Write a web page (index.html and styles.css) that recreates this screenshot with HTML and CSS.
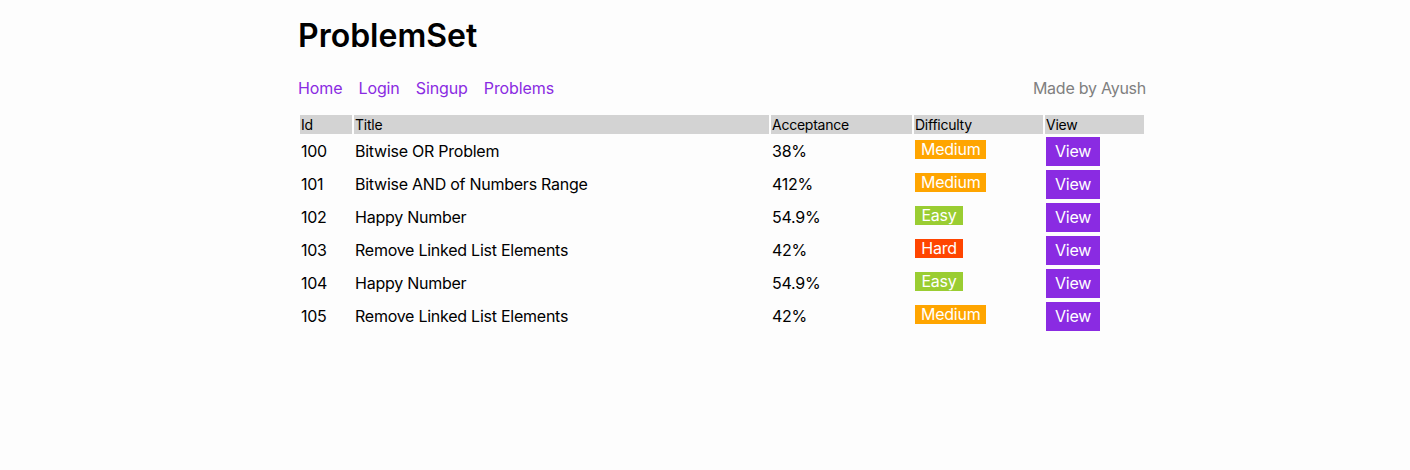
FILE: index.html
```html
<!DOCTYPE html>
<html lang="en">
<head>
<meta charset="utf-8">
<title>ProblemSet</title>
<link rel="stylesheet" href="styles.css">
</head>
<body>
<div class="page">
  <h1 class="brand">ProblemSet</h1>
  <nav class="nav">
    <div class="links">
      <a href="#">Home</a>
      <a href="#">Login</a>
      <a href="#">Singup</a>
      <a href="#">Problems</a>
    </div>
    <span class="credit">Made by Ayush</span>
  </nav>
  <table class="problems">
    <thead>
      <tr>
        <th class="c-id">Id</th>
        <th class="c-title">Title</th>
        <th class="c-acc">Acceptance</th>
        <th class="c-diff">Difficulty</th>
        <th class="c-view">View</th>
      </tr>
    </thead>
    <tbody>
      <tr><td>100</td><td>Bitwise OR Problem</td><td>38%</td><td><span class="badge medium">Medium</span></td><td><button class="view">View</button></td></tr>
      <tr><td>101</td><td>Bitwise AND of Numbers Range</td><td>412%</td><td><span class="badge medium">Medium</span></td><td><button class="view">View</button></td></tr>
      <tr><td>102</td><td>Happy Number</td><td>54.9%</td><td><span class="badge easy">Easy</span></td><td><button class="view">View</button></td></tr>
      <tr><td>103</td><td>Remove Linked List Elements</td><td>42%</td><td><span class="badge hard">Hard</span></td><td><button class="view">View</button></td></tr>
      <tr><td>104</td><td>Happy Number</td><td>54.9%</td><td><span class="badge easy">Easy</span></td><td><button class="view">View</button></td></tr>
      <tr><td>105</td><td>Remove Linked List Elements</td><td>42%</td><td><span class="badge medium">Medium</span></td><td><button class="view">View</button></td></tr>
    </tbody>
  </table>
</div>
</body>
</html>
```

FILE: styles.css
```css
body {
  margin: 0;
  background: #fdfdfd;
  color: #000;
  font-family: Inter, "Open Sans", sans-serif;
  letter-spacing: -0.25px;
}

.page {
  width: 848px;
  margin-left: 298px;
  padding-top: 16px;
}

.brand {
  margin: 0;
  font-size: 32px;
  font-weight: 600;
  line-height: 40px;
  letter-spacing: 0;
}

.nav {
  display: flex;
  justify-content: space-between;
  align-items: center;
  margin-top: 21px;
  font-size: 16px;
  line-height: 22px;
}

.links {
  display: flex;
  gap: 16px;
  letter-spacing: -0.1px;
}

.links a {
  color: #8a2be2;
  text-decoration: none;
}

.credit {
  color: #808080;
}

.problems {
  margin-top: 14px;
  width: 848px;
  border-spacing: 2px;
  table-layout: fixed;
  font-size: 16px;
}

.problems th,
.problems td {
  box-sizing: border-box;
  padding: 1px;
  text-align: left;
}

.problems th {
  background: #d3d3d3;
  font-size: 14px;
  font-weight: normal;
  line-height: 17px;
}

.problems td {
  height: 31px;
  line-height: 19px;
  vertical-align: middle;
}

.c-id { width: 52px; }
.c-title { width: 415px; }
.c-acc { width: 141px; }
.c-diff { width: 129px; }
.c-view { width: 99px; }

.badge {
  display: inline-block;
  box-sizing: border-box;
  min-width: 48px;
  padding: 0 6px;
  line-height: 19px;
  text-align: center;
  color: #fff;
  vertical-align: top;
  margin-bottom: 4px;
}

.medium { background: #ffa500; }
.easy { background: #9acd32; }
.hard { background: #ff4500; }

.view {
  display: block;
  width: 54px;
  border: 0;
  margin: 0;
  padding: 5px 0;
  background: #8a2be2;
  color: #fff;
  font-family: inherit;
  font-size: 16px;
  line-height: 19px;
  letter-spacing: inherit;
  text-align: center;
  cursor: pointer;
}
```
